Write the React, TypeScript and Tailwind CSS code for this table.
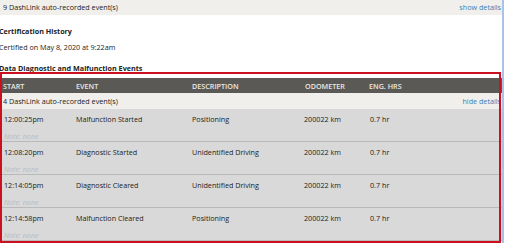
import React from 'react';

const events = [
  { start: '12:00:25pm', event: 'Malfunction Started', desc: 'Positioning', odo: '200022 km', hrs: '0.7 hr' },
  { start: '12:08:20pm', event: 'Diagnostic Started', desc: 'Unidentified Driving', odo: '200022 km', hrs: '0.7 hr' },
  { start: '12:14:05pm', event: 'Diagnostic Cleared', desc: 'Unidentified Driving', odo: '200022 km', hrs: '0.7 hr' },
  { start: '12:14:58pm', event: 'Malfunction Cleared', desc: 'Positioning', odo: '200022 km', hrs: '0.7 hr' },
];

const cols = 'grid grid-cols-[76px_116px_112px_65px_1fr]';

export default function App() {
  return (
    <div
      className="relative h-[243px] w-[505px] overflow-hidden bg-white text-[7.2px] text-[#222]"
      style={{ fontFamily: '"Open Sans", "DejaVu Sans", sans-serif' }}
    >
      <div className="h-full w-[504px] border-r-2 border-[#a9c3e8]">
        {/* Collapsed summary bar */}
        <div className="flex h-[15px] items-center justify-between bg-[#f0efeb] pl-[3px] pr-[1px]">
          <span>9 DashLink auto-recorded event(s)</span>
          <span className="text-[#3d7db4]">show details</span>
        </div>

        {/* Certification */}
        <div className="-ml-px">
          <div className="mt-[9px] text-[7.2px] font-bold leading-[14px]">Certification History</div>
          <div className="mt-[2px] leading-[14px]">Certified on May 8, 2020 at 9:22am</div>
          <div className="mt-[7px] text-[7.2px] font-bold leading-[14px]">Data Diagnostic and Malfunction Events</div>
        </div>

        {/* Events table */}
        <div className="mt-[3px]">
          <div className={`${cols} h-[15px] items-center bg-[#5b5956] pt-px font-semibold text-[#ece9e2]`}>
            <span className="pl-[3px]">START</span>
            <span>EVENT</span>
            <span>DESCRIPTION</span>
            <span className="pl-px">ODOMETER</span>
            <span>ENG. HRS</span>
          </div>
          <div className="flex h-[16px] items-center justify-between bg-[#f0efeb] pl-[3px] pr-[1px]">
            <span>4 DashLink auto-recorded event(s)</span>
            <span className="text-[#3d7db4]">hide details</span>
          </div>
          {events.map((e) => (
            <div key={e.start} className="h-[33px] border-b border-[#b9b9b9] bg-[#d9d9d9] pt-[4px] leading-[12px]">
              <div className={cols}>
                <span className="pl-[4px]">{e.start}</span>
                <span>{e.event}</span>
                <span>{e.desc}</span>
                <span>{e.odo}</span>
                <span className="pl-px">{e.hrs}</span>
              </div>
              <div className="mt-[5px] pl-[4px] italic text-[#b9b9b9]">Note: none</div>
            </div>
          ))}
        </div>
      </div>

      {/* Red highlight annotation */}
      <div className="pointer-events-none absolute left-0 top-[72px] h-[171px] w-[501px] border-2 border-[#cc1020]" />
    </div>
  );
}
